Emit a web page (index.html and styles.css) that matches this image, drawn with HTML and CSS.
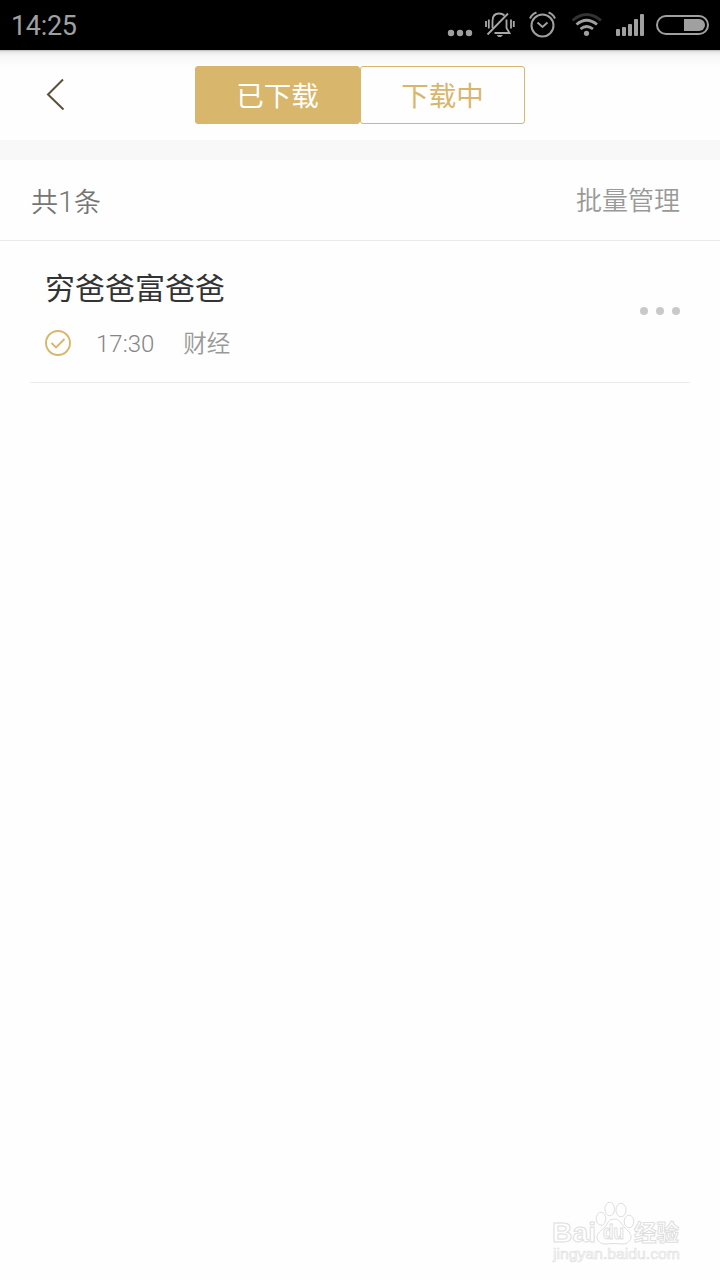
FILE: index.html
```html
<!DOCTYPE html>
<html lang="zh-CN">
<head>
  <meta charset="UTF-8" />
  <title>已下载</title>
  <link rel="stylesheet" href="styles.css">
</head>
<body>

  <div class="statusbar">
    <span class="clock">14:25</span>
    <div class="status-icons">
      <svg class="i-more" width="26" height="50" viewBox="0 0 26 50" fill="#a0a0a0">
        <circle cx="4" cy="33" r="3.2"/><circle cx="13" cy="33" r="3.2"/><circle cx="22" cy="33" r="3.2"/>
      </svg>
      <svg class="i-mute" width="32" height="50" viewBox="0 0 32 50" fill="none" stroke="#a8a8a8" stroke-width="1.8">
        <path d="M2 21v6M4.800 19.500v9M27 19.500v9M29.800 21v6"/>
        <path d="M8.500 28V21C8.500 16 11 13.500 15 13.500c2 0 4 .5 5.500 2M22.500 19.500V28l3 5H10.500"/>
        <path d="M3.500 34.500L24 13.500"/>
        <path d="M12.500 35h6.500l-2 2h-2.500z" fill="#a0a0a0" stroke="none"/>
      </svg>
      <svg class="i-alarm" width="30" height="50" viewBox="0 0 30 50" fill="none" stroke="#a0a0a0" stroke-width="2">
        <circle cx="14.500" cy="25.500" r="11"/>
        <path d="M9.500 22.500l5 4.500 5-4.500"/>
        <path d="M2 18.500Q4 14 8.500 12.500M27 18.500Q25 14 20.500 12.500"/>
      </svg>
      <svg class="i-wifi" width="32" height="50" viewBox="0 0 32 50" fill="none" stroke="#a0a0a0" stroke-width="2.800">
        <path d="M1.500 20.500Q15.500 8.500 30 20.500" stroke="#333"/>
        <path d="M5.500 24.500Q15.500 16 26 24.500M9.500 29Q15.500 24 22 29"/>
        <circle cx="15.500" cy="33.300" r="2.600" fill="#a0a0a0" stroke="none"/>
      </svg>
      <svg class="i-signal" width="28" height="50" viewBox="0 0 28 50" fill="#a0a0a0">
        <rect x="0" y="29" width="4" height="7" rx="1"/><rect x="6" y="27" width="4" height="9" rx="1"/>
        <rect x="12" y="24" width="4" height="12" rx="1"/><rect x="18" y="19" width="4" height="17" rx="1"/>
        <rect x="24" y="14" width="4" height="22" rx="1"/>
      </svg>
      <svg class="i-battery" width="53" height="50" viewBox="0 0 53 50">
        <rect x="1" y="16" width="51" height="18" rx="9" fill="none" stroke="#a0a0a0" stroke-width="2"/>
        <path d="M28 19h15a6 6 0 0 1 0 12H28z" fill="#a0a0a0"/>
      </svg>
    </div>
  </div>

  <div class="header">
    <svg class="back" width="20" height="34" viewBox="0 0 20 34" fill="none" stroke="#5c5138" stroke-width="2">
      <path d="M17 2.500L2 17.500l15.500 15"/>
    </svg>
    <div class="tabs">
      <div class="tab active">已下载</div>
      <div class="tab">下载中</div>
    </div>
  </div>

  <div class="summary">
    <span class="count">共<span class="num">1</span>条</span>
    <span class="manage">批量管理</span>
  </div>

  <div class="item">
    <div class="info">
      <div class="title">穷爸爸富爸爸</div>
      <div class="meta">
        <svg width="26" height="26" viewBox="0 0 26 26" fill="none" stroke="#d8b66b" stroke-width="1.900">
          <circle cx="13" cy="13" r="12"/><path d="M6.500 13l4.500 4.500 8.500-8.500"/>
        </svg>
        <span class="time">17:30</span>
        <span class="category">财经</span>
      </div>
    </div>
    <svg class="more" width="40" height="8" viewBox="0 0 40 8" fill="#c9c9c9">
      <circle cx="4" cy="4" r="4"/><circle cx="20" cy="4" r="4"/><circle cx="36" cy="4" r="4"/>
    </svg>
  </div>

  <svg class="watermark" width="136" height="68" viewBox="0 0 136 68">
    <g fill="#fff" stroke="#dedede">
      <ellipse cx="50" cy="19.700" rx="4.800" ry="6.500"/><ellipse cx="58.700" cy="10" rx="4.800" ry="6.800"/>
      <ellipse cx="70" cy="11" rx="5" ry="6.800"/><ellipse cx="78" cy="22.500" rx="4.800" ry="6.300"/>
      <path d="M63 20c5 0 7 4 10 8 4 4 7 6 7 10 0 4-4 7-8 7-3 0-6-.5-9-.5s-6 .5-9 .5c-4 0-8-3-8-7 0-4 4-6 8-10 3-4 4-8 9-8z"/>
      <text class="wm-logo" x="1" y="43" textLength="44" lengthAdjust="spacingAndGlyphs">Bai</text>
      <text class="wm-du" x="52" y="40" textLength="21" lengthAdjust="spacingAndGlyphs">du</text>
      <text class="wm-cn" x="83" y="42" textLength="45" lengthAdjust="spacingAndGlyphs">经验</text>
    </g>
    <text class="wm-url" x="2" y="60" textLength="127" lengthAdjust="spacingAndGlyphs">jingyan.baidu.com</text>
  </svg>

</body>
</html>
```

FILE: styles.css
```css
* { box-sizing: border-box; }
body { margin: 0; min-height: 1280px; background: #fefefe; font-family: Roboto, "Noto Sans CJK SC", sans-serif; }
svg { display: block; flex: none; }

.statusbar { height: 50px; padding: 0 11px; background: #000; display: flex; justify-content: space-between; }
.clock { font-size: 27px; letter-spacing: -.3px; line-height: 53px; color: #a0a0a0; }
.status-icons { display: flex; }
.i-mute { margin-left: 11px; }
.i-alarm { margin-left: 12px; }
.i-wifi { margin-left: 13px; }
.i-signal { margin-left: 13px; }
.i-battery { margin-left: 12px; }

.header { height: 90px; padding: 16px 195px 0 46px; display: flex; justify-content: space-between; background: linear-gradient(#bbb, #e9e9e9 2px, #f7f7f7 6px, #fefefe 17px); }
.back { margin-top: 11px; }
.tabs { display: flex; width: 330px; height: 58px; }
.tab { flex: 1; border: 1px solid #d8b66b; border-radius: 3px; color: #d8b66b; font-size: 27.500px; line-height: 59px; text-align: center; }
.active { background: #d8b66b; color: #fff; }

.summary { height: 101px; padding: 0 40px 0 31px; border-top: 20px solid #f8f8f8; border-bottom: 1px solid #e9e9e9; display: flex; justify-content: space-between; }
.count { font-size: 27px; line-height: 84px; color: #757575; font-weight: 350; }
.num { font-size: 29px; }
.manage { font-size: 26px; line-height: 82px; color: #999; font-weight: 350; }

.item { height: 142px; margin: 0 30px; padding: 0 10px 2px 15px; border-bottom: 1px solid #ebebeb; display: flex; justify-content: space-between; align-items: center; }
.title { font-size: 30px; line-height: 44px; color: #333; padding-top: 7px; }
.meta { display: flex; align-items: center; margin-top: 13px; line-height: 34px; font-size: 24px; color: #999; font-weight: 350; }
.time { margin-left: 25px; font-weight: 300; color: #858585; padding-top: 2px; }
.category { margin-left: 29px; font-size: 23.500px; padding-top: 3px; }

.watermark { position: absolute; left: 551px; top: 1199px; font-family: "Liberation Sans", "Noto Sans CJK SC", sans-serif; }
.wm-logo { font-size: 28px; font-weight: bold; }
.wm-du { font-size: 20px; font-weight: bold; }
.wm-cn { font-size: 23px; font-weight: bold; }
.wm-url { font-size: 14px; fill: #fff; stroke: #dedede; stroke-width: .6px; }
```
